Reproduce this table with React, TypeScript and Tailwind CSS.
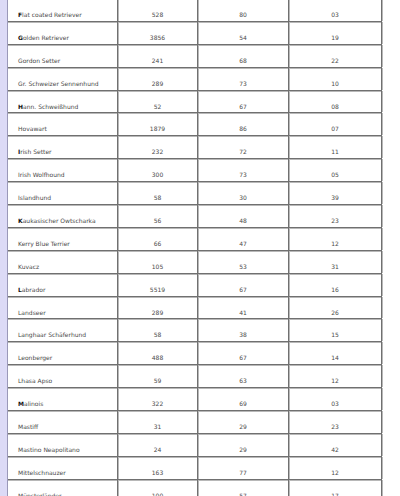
import React from "react";

const rows: [string, string, string, string][] = [
  ["Flat coated Retriever", "528", "80", "03"],
  ["Golden Retriever", "3856", "54", "19"],
  ["Gordon Setter", "241", "68", "22"],
  ["Gr. Schweizer Sennenhund", "289", "73", "10"],
  ["Hann. Schweißhund", "52", "67", "08"],
  ["Hovawart", "1879", "86", "07"],
  ["Irish Setter", "232", "72", "11"],
  ["Irish Wolfhound", "300", "73", "05"],
  ["Islandhund", "58", "30", "39"],
  ["Kaukasischer Owtscharka", "56", "48", "23"],
  ["Kerry Blue Terrier", "66", "47", "12"],
  ["Kuvacz", "105", "53", "31"],
  ["Labrador", "5519", "67", "16"],
  ["Landseer", "289", "41", "26"],
  ["Langhaar Schäferhund", "58", "38", "15"],
  ["Leonberger", "488", "67", "14"],
  ["Lhasa Apso", "59", "63", "12"],
  ["Malinois", "322", "69", "03"],
  ["Mastiff", "31", "29", "23"],
  ["Mastino Neapolitano", "24", "29", "42"],
  ["Mittelschnauzer", "163", "77", "12"],
  ["Münsterländer", "100", "57", "17"],
];

// first breed of each letter gets a bold initial
const anchors = new Set(["Flat coated Retriever", "Golden Retriever", "Hann. Schweißhund", "Irish Setter", "Kaukasischer Owtscharka", "Labrador", "Malinois"]);

const cell = "flex items-start pt-[12px] leading-[8px] border-r border-[#707070] shadow-[1px_0_0_#b8b8b8]";

export default function App() {
  return (
    <div className="flex h-[496px] overflow-hidden bg-white font-['DejaVu_Sans',sans-serif] text-[6px] text-[#4a4a4a]">
      <div className="w-[8px] shrink-0 bg-[#dcdaf6] border-r border-[#9a98b8]" />
      <div className="-mt-[1px]">
        {rows.map(([name, a, b, c]) => (
          <div
            key={name}
            className="grid grid-cols-[110px_80px_91px_93px] h-[22.9px] border-b border-[#707070] shadow-[0_1px_0_#b8b8b8]"
          >
            <div className={`${cell} pl-[10px]`}>
              {anchors.has(name) ? (
                <>
                  <b className="font-bold text-[#111]">{name[0]}</b>
                  {name.slice(1)}
                </>
              ) : (
                name
              )}
            </div>
            <div className={`${cell} justify-center`}>{a}</div>
            <div className={`${cell} justify-center`}>{b}</div>
            <div className={`${cell} justify-center`}>{c}</div>
          </div>
        ))}
      </div>
    </div>
  );
}
